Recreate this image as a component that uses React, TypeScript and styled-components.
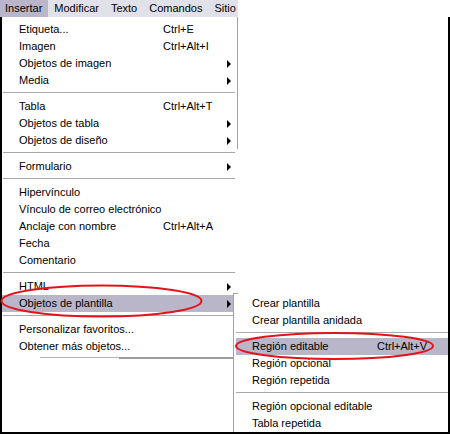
import React from "react";
import styled, { createGlobalStyle } from "styled-components";

const Global = createGlobalStyle`
  html, body { margin: 0; padding: 0; background: #ffffff; }
  body { font-family: "Liberation Sans", Arial, sans-serif; font-size: 11px; color: #000; }
`;

const Page = styled.div`
  position: relative;
  width: 450px;
  height: 435px;
  display: flex;
  flex-direction: column;
  background: #fff;
`;

const MenuBar = styled.div`
  display: flex;
  width: 238px;
  height: 17px;
  background: #e1e1ea;
  flex: none;
`;

const BarItem = styled.div<{ $active?: boolean }>`
  height: 17px;
  line-height: 17px;
  padding: 0 ${(p) => (p.$active ? "6px 0 5px" : "6px")};
  background: ${(p) => (p.$active ? "#b8b6c8" : "transparent")};
  white-space: nowrap;
`;

const Frame = styled.div`
  position: relative;
  height: 415px;
  border-left: 2px solid #000;
  border-right: 2px solid #000;
  border-bottom: 2px solid #000;
  overflow: hidden;
  flex: none;
`;

const Menu = styled.div`
  width: 236px;
  background: #fff;
  padding-bottom: 2px;
`;

const Group = styled.div<{ $edge?: boolean }>`
  border-right: 1px solid ${(p) => (p.$edge ? "#a3a3a3" : "transparent")};
  padding-top: ${(p) => (p.$edge ? "4px" : "0")};
`;

const Row = styled.div<{ $hl?: boolean; $sub?: boolean }>`
  position: relative;
  display: grid;
  grid-template-columns: ${(p) => (p.$sub ? "125px 1fr" : "144px 1fr 4px")};
  align-items: center;
  height: 17px;
  line-height: 17px;
  padding: ${(p) => (p.$sub ? "0 4px 0 16px" : "0 6px 0 17px")};
  background: ${(p) => (p.$hl ? "#b8b6c8" : "transparent")};
  white-space: nowrap;
`;

const Label = styled.span``;
const Shortcut = styled.span``;

const Arrow = styled.span`
  width: 0;
  height: 0;
  border-top: 4px solid transparent;
  border-bottom: 4px solid transparent;
  border-left: 4px solid #000;
`;

const Sep = styled.div<{ $sub?: boolean }>`
  height: 9px;
  box-sizing: border-box;
  padding-top: 3px;
  margin: ${(p) => (p.$sub ? "0 2px 0 0" : "0 2px 0 1px")};
  &::after {
    content: "";
    display: block;
    height: 1px;
    background: #a8a8a8;
  }
`;

const Shadow = styled.div`
  display: flex;
  margin-left: 38px;
  width: 195px;
`;

const ShadowThin = styled.div`
  width: 79px;
  height: 1px;
  background: #b4b4b4;
`;

const ShadowThick = styled.div`
  flex: 1;
  height: 2px;
  background: #9c9c9c;
`;

const SubMenu = styled.div`
  position: absolute;
  top: -2px;
  left: 231px;
  width: 216px;
  height: 200px;
  padding-top: 2px;
  padding-left: 2px;
  background: #fff;
  border-left: 1px solid #a3a3a3;
  z-index: 2;
  &::before {
    content: "";
    position: absolute;
    top: 0;
    left: 0;
    width: 4px;
    height: 1px;
    background: #a3a3a3;
  }
`;

const Overlay = styled.svg`
  position: absolute;
  left: 0;
  top: 0;
  pointer-events: none;
  z-index: 5;
`;

type Item =
  | { sep: true }
  | { label: string; shortcut?: string; arrow?: boolean; hl?: boolean };

const subItems: Item[] = [
  { label: "Crear plantilla" },
  { label: "Crear plantilla anidada" },
  { sep: true },
  { label: "Región editable", shortcut: "Ctrl+Alt+V", hl: true },
  { label: "Región opcional" },
  { label: "Región repetida" },
  { sep: true },
  { label: "Región opcional editable" },
  { label: "Tabla repetida" },
];

const topItems: Item[] = [
  { label: "Etiqueta...", shortcut: "Ctrl+E" },
  { label: "Imagen", shortcut: "Ctrl+Alt+I" },
  { label: "Objetos de imagen", arrow: true },
  { label: "Media", arrow: true },
  { sep: true },
  { label: "Tabla", shortcut: "Ctrl+Alt+T" },
  { label: "Objetos de tabla", arrow: true },
  { label: "Objetos de diseño", arrow: true },
];

const restItems: Item[] = [
  { sep: true },
  { label: "Formulario", arrow: true },
  { sep: true },
  { label: "Hipervínculo" },
  { label: "Vínculo de correo electrónico" },
  { label: "Anclaje con nombre", shortcut: "Ctrl+Alt+A" },
  { label: "Fecha" },
  { label: "Comentario" },
  { sep: true },
  { label: "HTML", arrow: true },
  { label: "Objetos de plantilla", arrow: true, hl: true },
  { sep: true },
  { label: "Personalizar favoritos..." },
  { label: "Obtener más objetos..." },
];

function renderItems(items: Item[], sub = false) {
  return items.map((it, i) => {
    if ("sep" in it) return <Sep key={i} $sub={sub} />;
    const isTemplate = !sub && it.label === "Objetos de plantilla";
    return (
      <Row key={i} $hl={it.hl} $sub={sub}>
        <Label>{it.label}</Label>
        <Shortcut>{it.shortcut ?? ""}</Shortcut>
        {!sub && (it.arrow ? <Arrow /> : <span />)}
        {isTemplate && <SubMenu>{renderItems(subItems, true)}</SubMenu>}
      </Row>
    );
  });
}

export default function App() {
  return (
    <>
      <Global />
      <Page>
        <MenuBar>
          <BarItem $active>Insertar</BarItem>
          <BarItem>Modificar</BarItem>
          <BarItem>Texto</BarItem>
          <BarItem>Comandos</BarItem>
          <BarItem>Sitio</BarItem>
        </MenuBar>
        <Frame>
          <Menu>
            <Group $edge>{renderItems(topItems)}</Group>
            <Group>{renderItems(restItems)}</Group>
          </Menu>
          <Shadow>
            <ShadowThin />
            <ShadowThick />
          </Shadow>
        </Frame>
        <Overlay width="450" height="435" viewBox="0 0 450 435">
          <ellipse cx="101.5" cy="301" rx="100" ry="15.5" fill="none" stroke="#e3121b" strokeWidth="2" />
          <ellipse cx="334.5" cy="346" rx="98.5" ry="13" fill="none" stroke="#e3121b" strokeWidth="2" />
        </Overlay>
      </Page>
    </>
  );
}
